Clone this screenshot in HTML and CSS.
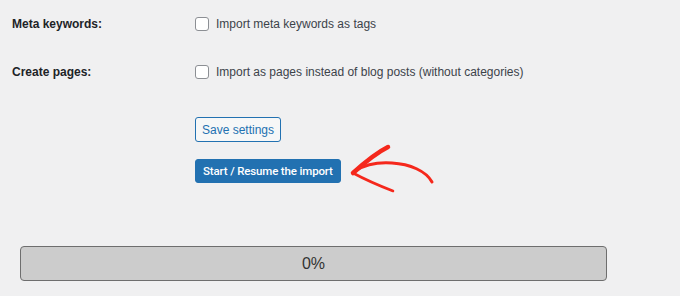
FILE: index.html
```html
<!DOCTYPE html>
<html lang="en">
<head>
<meta charset="UTF-8">
<title>Import settings</title>
<link rel="stylesheet" href="styles.css">
</head>
<body>
<div class="page">
  <div class="form-row">
    <div class="label">Meta keywords:</div>
    <label class="option"><span class="checkbox"></span>Import meta keywords as tags</label>
  </div>
  <div class="form-row">
    <div class="label">Create pages:</div>
    <label class="option"><span class="checkbox"></span>Import as pages instead of blog posts (without categories)</label>
  </div>
  <div class="actions">
    <button class="btn btn-secondary">Save settings</button>
    <button class="btn btn-primary">Start / Resume the import</button>
  </div>
  <div class="progress">0%</div>

  <svg class="arrow" width="100" height="60" viewBox="340 140 100 60">
    <path d="M353 173 C 364 163, 376 153, 388 147" stroke="#f5281c" stroke-width="4.5" fill="none" stroke-linecap="round"/>
    <path d="M353 173 C 366 180, 380 186, 393 191" stroke="#f5281c" stroke-width="2.6" fill="none" stroke-linecap="round"/>
    <path d="M355 171 C 366 164, 378 162, 392 163 C 410 164, 426 171, 432 182" stroke="#f5281c" stroke-width="3" fill="none" stroke-linecap="round"/>
  </svg>
</div>
</body>
</html>
```

FILE: styles.css
```css
body {
  margin: 0;
  background: #f0f0f1;
  font-family: "Liberation Sans", Arial, sans-serif;
  font-size: 12px;
  color: #3c434a;
}
.page {
  position: relative;
  padding: 0 12px;
}
.form-row {
  display: grid;
  grid-template-columns: 183px 1fr;
  align-items: center;
  height: 48px;
}
.label {
  font-weight: 600;
  color: #1d2327;
}
.option {
  display: flex;
  align-items: center;
  gap: 7px;
}
.checkbox {
  width: 12px;
  height: 12px;
  border: 1px solid #8c8f94;
  border-radius: 3px;
  background: #fff;
}
.actions {
  display: flex;
  flex-direction: column;
  align-items: flex-start;
  gap: 17px;
  padding: 21px 0 0 183px;
}
.btn {
  font-family: inherit;
  font-size: 12px;
  border-radius: 3px;
  padding: 0 6px;
  cursor: pointer;
}
.btn-secondary {
  height: 25px;
  background: #f6f7f7;
  border: 1px solid #2271b1;
  color: #2271b1;
}
.btn-primary {
  height: 24px;
  padding: 0 7px;
  background: #2271b1;
  border: 1px solid #2271b1;
  color: #fff;
  font-family: Roboto, "Liberation Sans", sans-serif;
  font-size: 11.5px;
  font-weight: 500;
  letter-spacing: -0.15px;
}
.progress {
  margin: 63px 0 0 8px;
  width: 585px;
  height: 33px;
  line-height: 33px;
  background: #cccccc;
  border: 1px solid #6e6e6e;
  border-radius: 4px;
  text-align: center;
  font-size: 16px;
  color: #333;
}
.arrow {
  position: absolute;
  left: 340px;
  top: 140px;
}
```
